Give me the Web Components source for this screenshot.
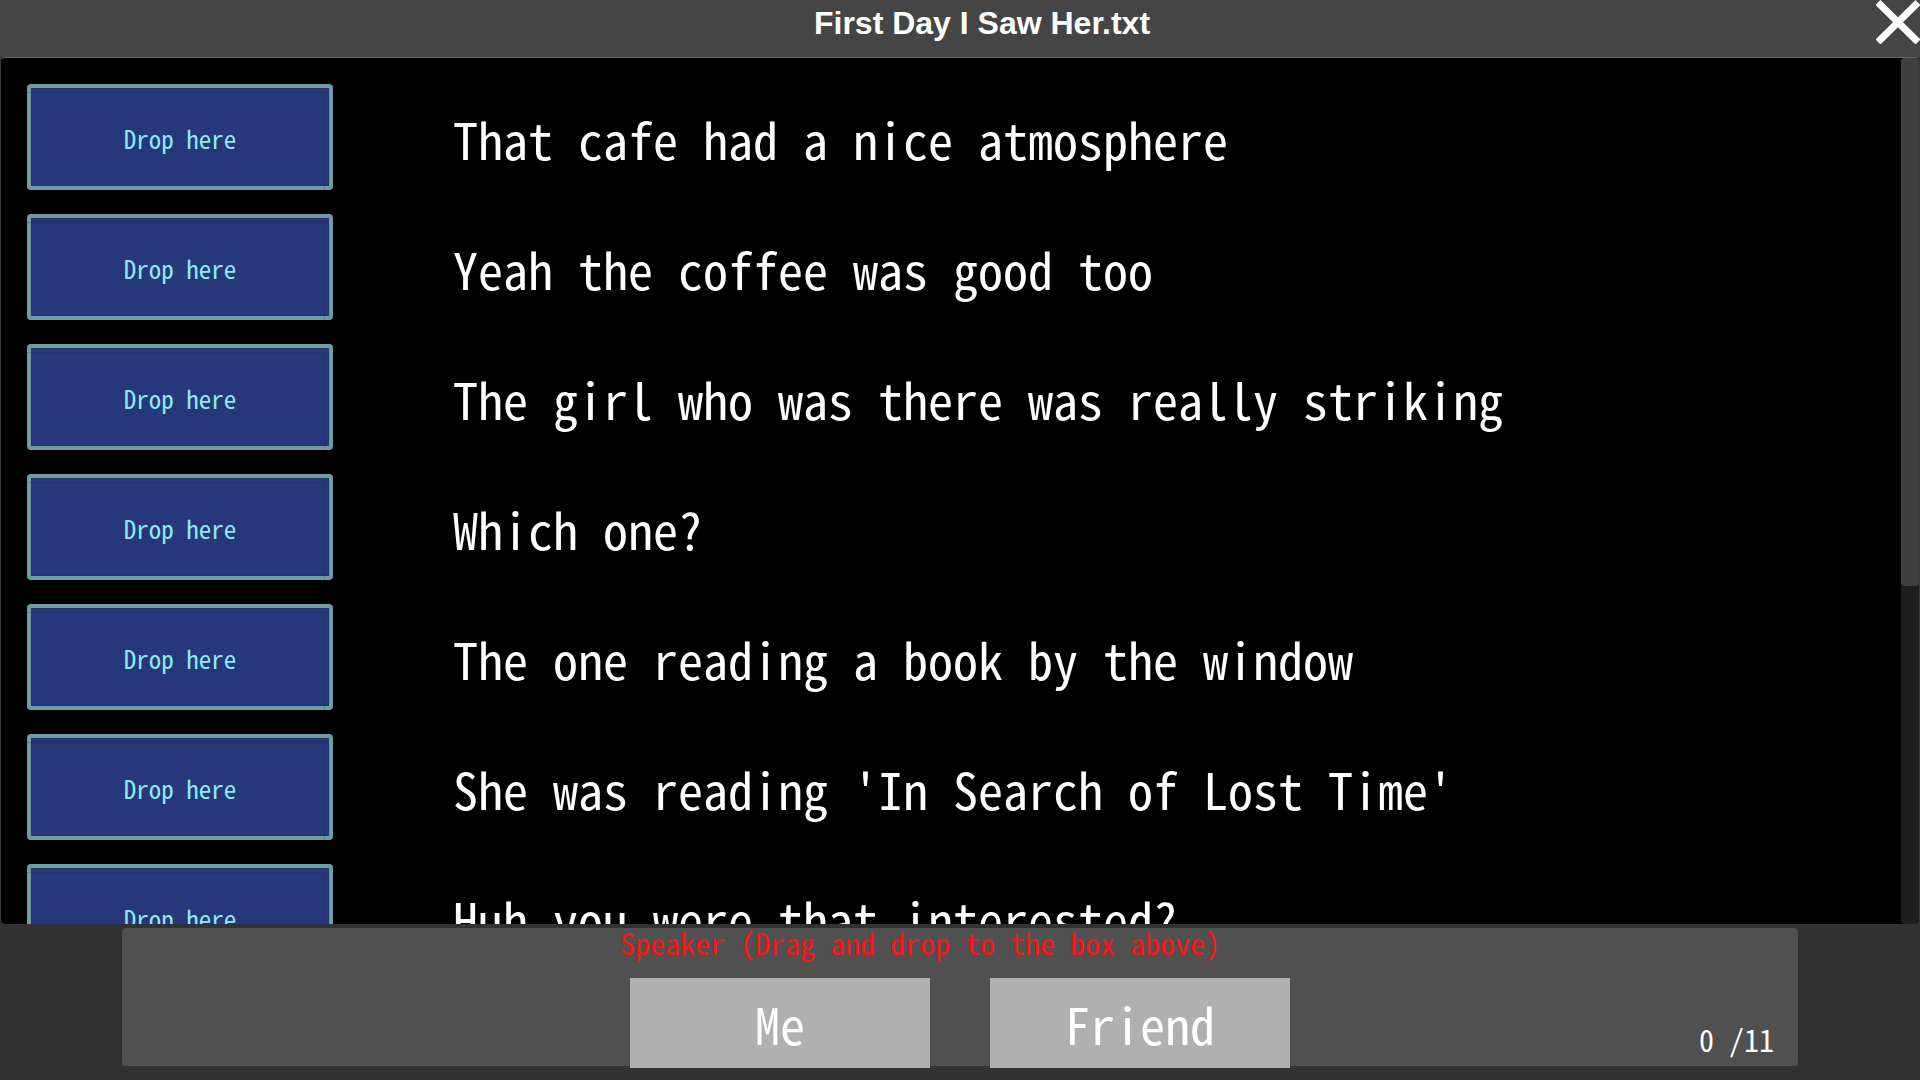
<!DOCTYPE html>
<html lang="en">
<head>
<meta charset="UTF-8">
<title>First Day I Saw Her.txt</title>
<style>
    html, body {
        margin: 0;
        height: 100%;
        background: #323232;
    }
</style>
</head>
<body>
<text-window>
    <title-bar slot="header">First Day I Saw Her.txt</title-bar>
    <script-line>That cafe had a nice atmosphere</script-line>
    <script-line>Yeah the coffee was good too</script-line>
    <script-line>The girl who was there was really striking</script-line>
    <script-line>Which one?</script-line>
    <script-line>The one reading a book by the window</script-line>
    <script-line>She was reading 'In Search of Lost Time'</script-line>
    <script-line>Huh you were that interested?</script-line>
    <speaker-panel slot="footer" total="11">
        <speaker-chip>Me</speaker-chip>
        <speaker-chip>Friend</speaker-chip>
    </speaker-panel>
</text-window>

<script>
class TextWindow extends HTMLElement {
    constructor() {
        super();
        const shadowRoot = this.attachShadow({ mode: 'open' });
        // hwid gives the half-width latin forms, every letter is 0.5em wide
        shadowRoot.innerHTML = `
            <style>
                :host{
                    display: flex;
                    flex-direction: column;
                    height: 100vh;
                    overflow: hidden;
                    color: #fff;
                    background: #323232;
                    font-family: "Noto Sans CJK JP", "Liberation Mono", monospace;
                    font-feature-settings: "hwid" 1;
                    font-variant-ligatures: none;
                }
                .viewport{
                    flex: 1;
                    min-height: 0;
                    display: flex;
                    overflow: hidden;
                    background: #000;
                    border: 1px solid #3c3c3c;
                    border-top-color: #666;
                    border-bottom: none;
                    border-radius: 5px;
                }
                .lines{
                    flex: 1;
                    display: flex;
                    flex-direction: column;
                    gap: 24px;
                    padding: 26px;
                    overflow: hidden;
                }
            </style>
            <slot name="header"></slot>
            <main class="viewport">
                <div class="lines"><slot></slot></div>
                <scroll-track></scroll-track>
            </main>
            <slot name="footer"></slot>
        `;
    }
}

class TitleBar extends HTMLElement {
    constructor() {
        super();
        const shadowRoot = this.attachShadow({ mode: 'open' });
        shadowRoot.innerHTML = `
            <style>
                :host{
                    display: grid;
                    grid-template-columns: 88px 1fr 44px;
                    height: 57px;
                    background: #454545;
                }
                h1{
                    grid-column: 2;
                    margin: 0;
                    font: bold 32px/46px "Liberation Sans", sans-serif;
                    text-align: center;
                }
                button{
                    width: 44px;
                    height: 44px;
                    padding: 0;
                    border: none;
                    background: none;
                    color: inherit;
                    cursor: pointer;
                }
                svg{
                    display: block;
                }
            </style>
            <h1><slot></slot></h1>
            <button type="button" aria-label="Close">
                <svg width="44" height="44" viewBox="0 0 44 44" stroke="currentColor" stroke-width="7">
                    <path d="M2 2.5L42 42M42 2.5L2 42"/>
                </svg>
            </button>
        `;
    }
}

class ScriptLine extends HTMLElement {
    constructor() {
        super();
        const shadowRoot = this.attachShadow({ mode: 'open' });
        shadowRoot.innerHTML = `
            <style>
                :host{
                    display: flex;
                    flex: none;
                    align-items: center;
                    gap: 120px;
                    height: 106px;
                }
                p{
                    margin: 0;
                    padding-top: 2px;
                    font-size: 50px;
                    line-height: 60px;
                    white-space: nowrap;
                }
            </style>
            <drop-box></drop-box>
            <p><slot></slot></p>
        `;
    }
}

class DropBox extends HTMLElement {
    constructor() {
        super();
        const shadowRoot = this.attachShadow({ mode: 'open' });
        shadowRoot.innerHTML = `
            <style>
                :host{
                    display: block;
                    width: 306px;
                    height: 106px;
                }
                button{
                    position: relative;
                    box-sizing: border-box;
                    width: 100%;
                    height: 100%;
                    padding: 2px 0 0;
                    border: 4px solid #6f9ca3;
                    border-radius: 4px;
                    background: #26387b;
                    box-shadow: inset 0 0 0 1px #223565;
                    color: #8eeaf0;
                    font: inherit;
                    font-feature-settings: inherit;
                    font-size: 25px;
                }
                /* thin seams of the frame */
                button::after{
                    content: "";
                    position: absolute;
                    inset: 4px 4px -4px -4px;
                    border: 1px solid rgba(20, 40, 70, 0.2);
                    border-left: none;
                    border-bottom: none;
                }
            </style>
            <button type="button">Drop here</button>
        `;
        const button = shadowRoot.querySelector('button');
        button.addEventListener("dragover", (e) => e.preventDefault());
        button.addEventListener("drop", (e) => {
            e.preventDefault();
            button.textContent = e.dataTransfer.getData("text/plain");
            this.dispatchEvent(new CustomEvent("speaker-drop", { bubbles: true, composed: true }));
        });
    }
}

class ScrollTrack extends HTMLElement {
    constructor() {
        super();
        const shadowRoot = this.attachShadow({ mode: 'open' });
        shadowRoot.innerHTML = `
            <style>
                :host{
                    display: block;
                    width: 18px;
                    border-radius: 4px;
                    background: #1e1e1e;
                }
                .thumb{
                    height: 61%;
                    border-radius: 4px;
                    background: #404040;
                }
            </style>
            <div class="thumb"></div>
        `;
    }
}

class SpeakerPanel extends HTMLElement {
    constructor() {
        super();
        const shadowRoot = this.attachShadow({ mode: 'open' });
        shadowRoot.innerHTML = `
            <style>
                :host{
                    display: block;
                    position: relative;
                    height: 138px;
                    margin: 4px 122px 14px;
                    border-radius: 4px;
                    background: #505050;
                }
                .hint{
                    margin: 0;
                    padding-right: 80px;
                    color: #ff1414;
                    font-size: 30px;
                    line-height: 28px;
                    text-align: center;
                }
                .speakers{
                    display: flex;
                    justify-content: center;
                    gap: 60px;
                    margin-top: 22px;
                }
                .count{
                    position: absolute;
                    right: 24px;
                    bottom: 12px;
                    font-size: 30px;
                    line-height: 30px;
                }
            </style>
            <p class="hint">Speaker (Drag and drop to the box above)</p>
            <div class="speakers"><slot></slot></div>
            <output class="count"></output>
        `;
        this.filled = 0;
        document.addEventListener("speaker-drop", () => {
            this.filled++;
            this.showCount();
        });
        this.showCount();
    }

    showCount() {
        this.shadowRoot.querySelector('.count').textContent = `${this.filled} /${this.getAttribute("total")}`;
    }
}

class SpeakerChip extends HTMLElement {
    constructor() {
        super();
        const shadowRoot = this.attachShadow({ mode: 'open' });
        shadowRoot.innerHTML = `
            <style>
                :host{
                    display: block;
                }
                button{
                    display: block;
                    width: 300px;
                    height: 90px;
                    padding: 0;
                    border: none;
                    background: #b0b0b0;
                    color: #fff;
                    font: inherit;
                    font-feature-settings: inherit;
                    font-size: 50px;
                    line-height: 60px;
                    cursor: grab;
                }
            </style>
            <button type="button" draggable="true"><slot></slot></button>
        `;
        shadowRoot.querySelector('button').addEventListener("dragstart", (e) => {
            e.dataTransfer.setData("text/plain", this.textContent);
        });
    }
}

customElements.define('text-window', TextWindow);
customElements.define('title-bar', TitleBar);
customElements.define('drop-box', DropBox);
customElements.define('script-line', ScriptLine);
customElements.define('scroll-track', ScrollTrack);
customElements.define('speaker-panel', SpeakerPanel);
customElements.define('speaker-chip', SpeakerChip);
</script>
</body>
</html>
